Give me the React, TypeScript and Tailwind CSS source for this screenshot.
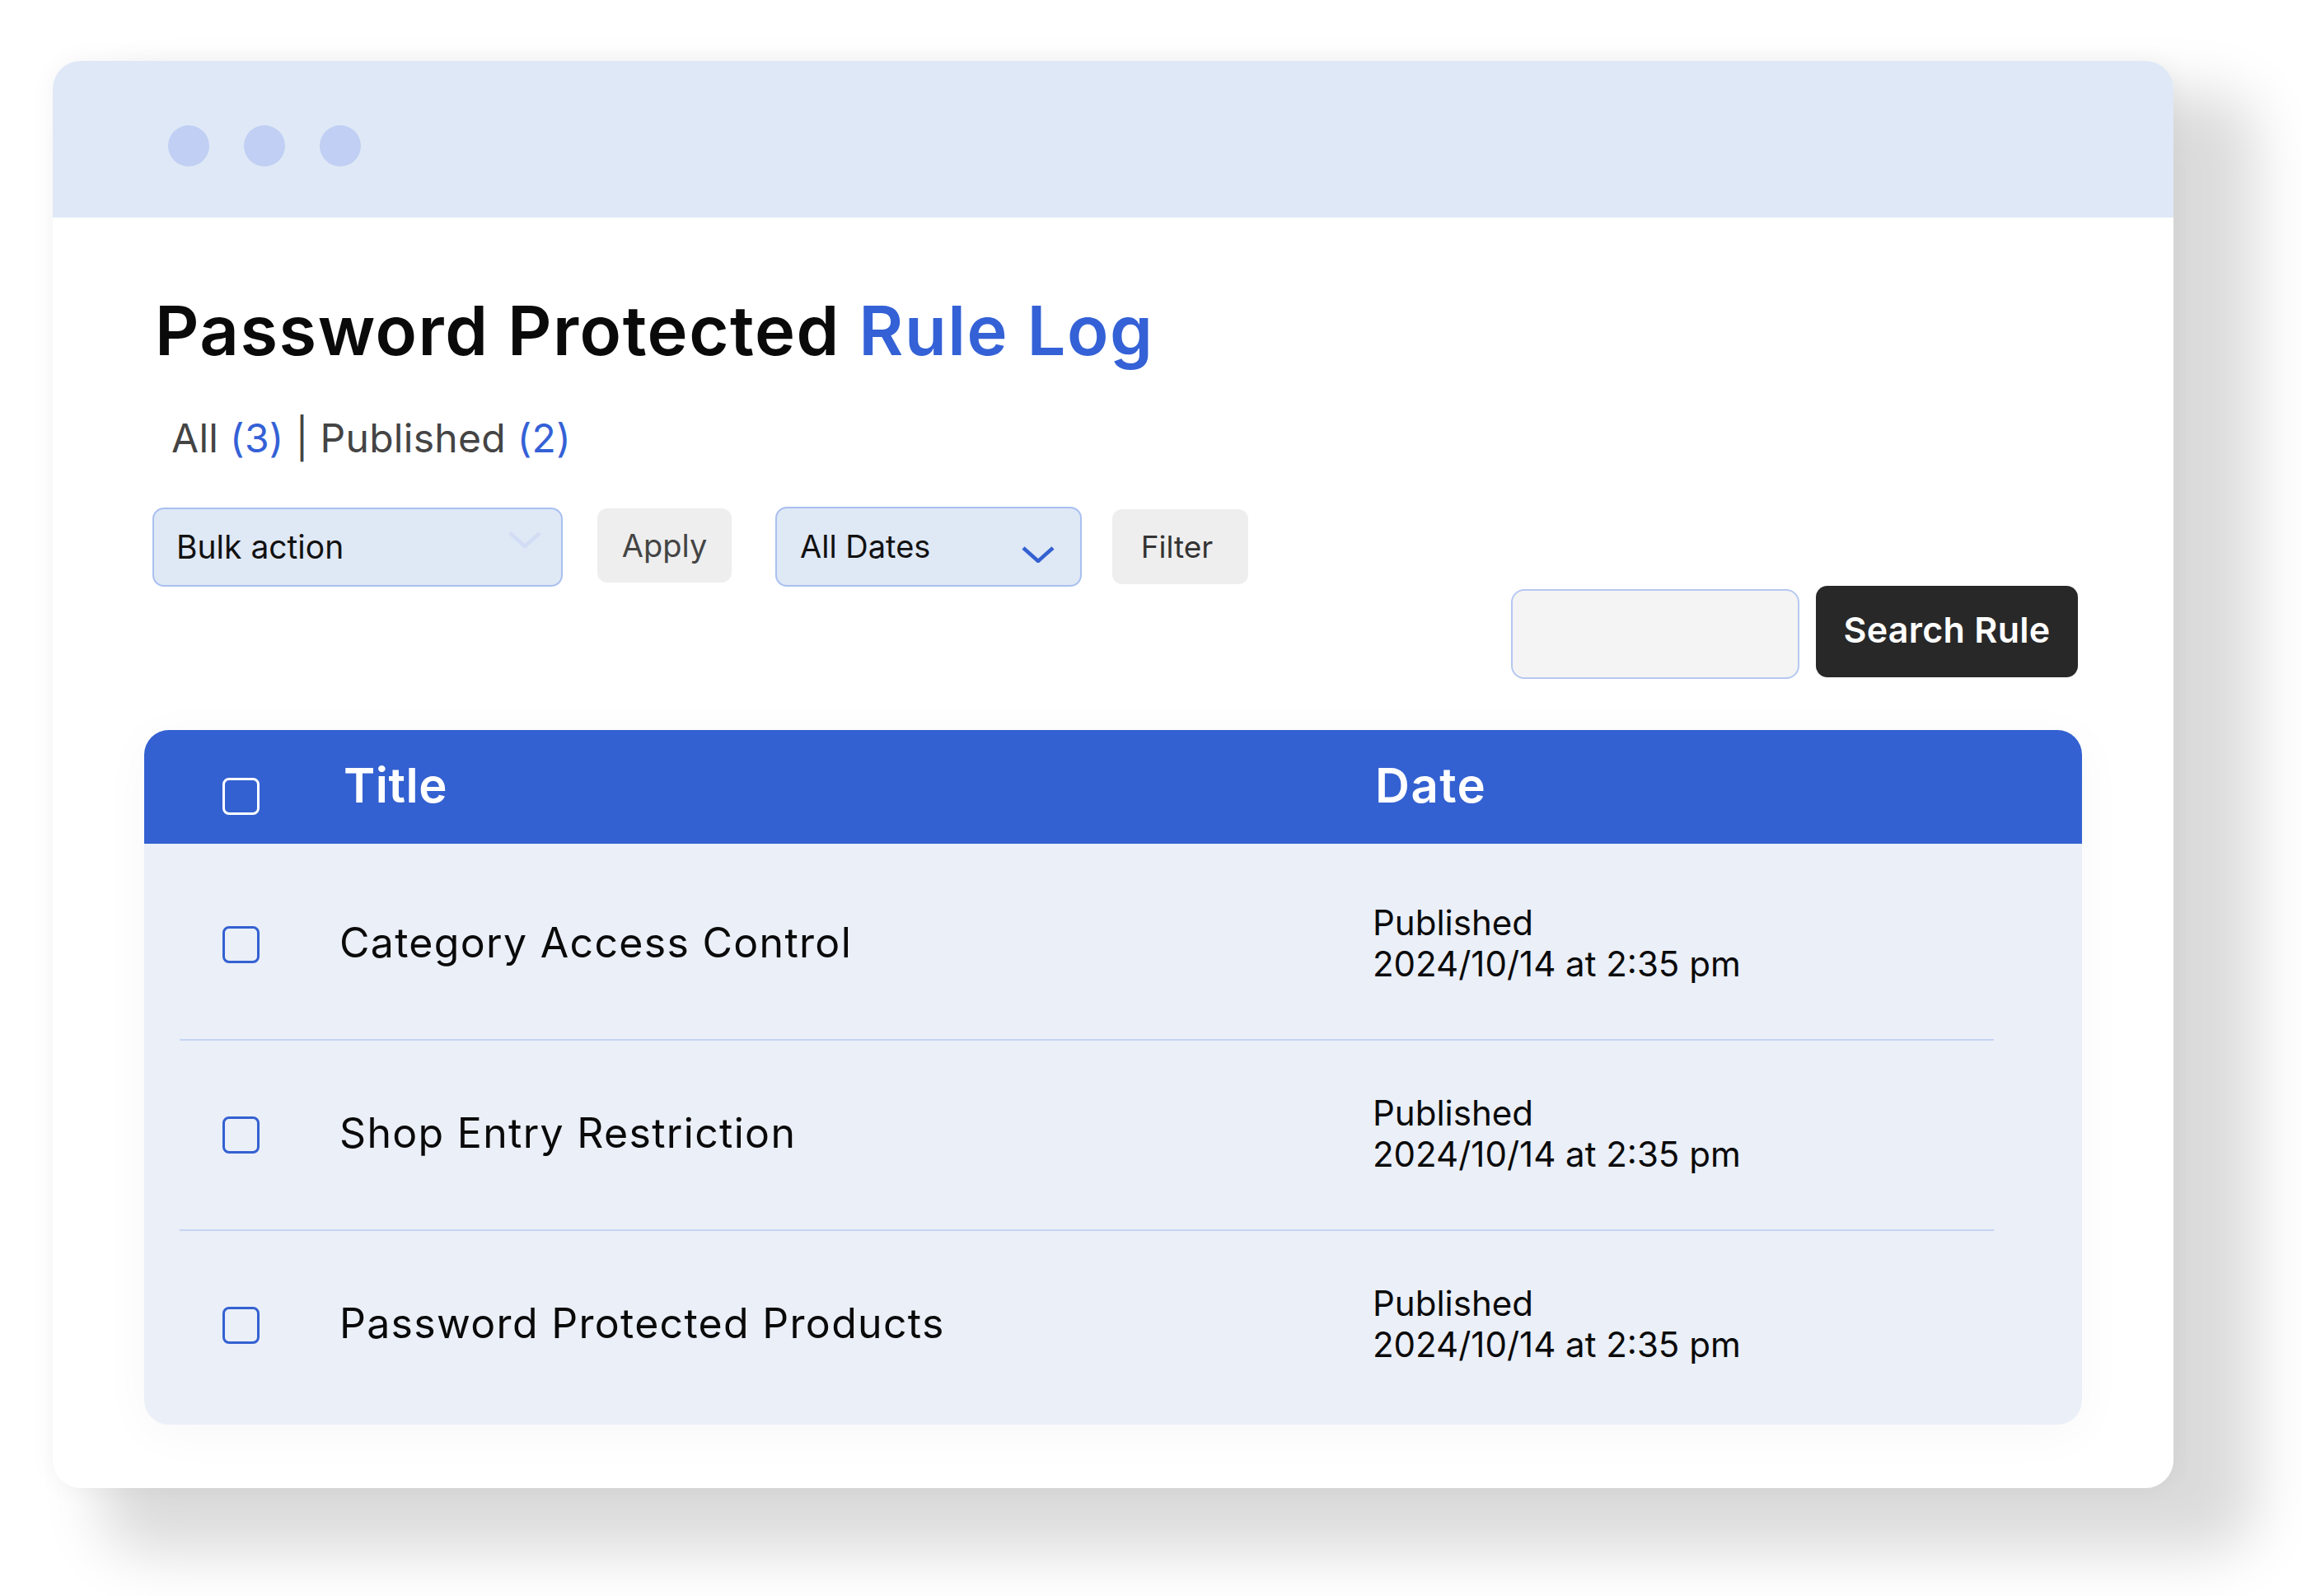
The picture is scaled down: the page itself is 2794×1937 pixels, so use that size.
import * as React from "react"

const rows = [
  { title: "Category Access Control", date: "2024/10/14 at 2:35 pm" },
  { title: "Shop Entry Restriction", date: "2024/10/14 at 2:35 pm" },
  { title: "Password Protected Products", date: "2024/10/14 at 2:35 pm" },
]

function Chevron({ className }: { className?: string }) {
  return (
    <svg viewBox="0 0 40 20" className={className} fill="none">
      <path d="M2 2 L20 18 L38 2" stroke="currentColor" strokeWidth="4.5" strokeLinecap="butt" strokeLinejoin="miter" />
    </svg>
  )
}

function Checkbox({ light }: { light?: boolean }) {
  return (
    <div
      className={
        light
          ? "w-[45px] h-[45px] shrink-0 rounded-[8px] border-[3px] border-white"
          : "w-[45px] h-[45px] shrink-0 rounded-[8px] border-[3px] border-[#3461d1]"
      }
    />
  )
}

export default function App() {
  return (
    <div className="w-[2794px] h-[1937px] bg-white overflow-hidden font-['Inter',_'Noto_Sans',_sans-serif]">
      <div className="pl-[64px] pt-[74px]">
        <div className="w-[2574px] h-[1732px] bg-white rounded-[34px] overflow-hidden shadow-[79px_58px_70px_20px_rgba(0,0,0,0.145),0_0_30px_rgba(0,0,0,0.05)] flex flex-col">
          {/* Window bar */}
          <div className="h-[190px] bg-[#dfe8f6] flex items-start gap-[42px] pl-[140px] pt-[78px]">
            <span className="w-[50px] h-[50px] rounded-full bg-[#c0cff3]" />
            <span className="w-[50px] h-[50px] rounded-full bg-[#c0cff3]" />
            <span className="w-[50px] h-[50px] rounded-full bg-[#c0cff3]" />
          </div>

          {/* Heading */}
          <h1 className="mt-[96px] ml-[124px] text-[83px] leading-none font-semibold text-[#0a0a0a] tracking-[1.5px]">
            Password Protected <span className="text-[#3461d6]">Rule Log</span>
          </h1>
          <p className="mt-[65px] ml-[144px] text-[48px] leading-none text-[#444444] tracking-[0.3px]">
            All <span className="text-[#3461d6]">(3)</span> | Published{" "}
            <span className="text-[#3461d6]">(2)</span>
          </p>

          {/* Controls */}
          <div className="mt-[60px] ml-[121px] flex items-start">
            <div className="w-[498px] h-[96px] rounded-[14px] bg-[#dfe8f5] border-2 border-[#a9c0f0] flex items-center justify-between pl-[27px] pr-[24px]">
              <span className="text-[39px] text-[#111111]">Bulk action</span>
              <Chevron className="w-[40px] h-[20px] text-[#d2ddf5] -mt-[18px]" />
            </div>
            <button className="ml-[42px] mt-[1px] w-[163px] h-[90px] rounded-[12px] bg-[#eeeeee] text-[38px] text-[#444444]">
              Apply
            </button>
            <div className="ml-[53px] -mt-[1px] w-[372px] h-[97px] rounded-[14px] bg-[#dfe8f5] border-2 border-[#a9c0f0] flex items-center justify-between pl-[28px] pr-[31px]">
              <span className="text-[38px] text-[#111111]">All Dates</span>
              <Chevron className="w-[40px] h-[20px] text-[#3461d1] mt-[18px]" />
            </div>
            <button className="ml-[37px] mt-[2px] w-[165px] h-[91px] rounded-[12px] bg-[#eeeeee] text-[37px] text-[#333333] pr-[8px]">
              Filter
            </button>
          </div>

          {/* Search */}
          <div className="flex justify-end items-start gap-[20px] pr-[116px] -mt-[1px]">
            <div className="mt-[4px] w-[350px] h-[109px] rounded-[16px] bg-[#f4f4f4] border-2 border-[#b6c8f0]" />
            <button className="w-[318px] h-[111px] rounded-[14px] bg-[#282828] text-white text-[43px] font-semibold pb-[4px] tracking-[0.3px]">
              Search Rule
            </button>
          </div>

          {/* Table */}
          <div className="mt-[62px] mx-[111px] rounded-[30px] overflow-hidden bg-[#eaeff8] shadow-[0_10px_60px_rgba(0,0,0,0.035)]">
            <div className="h-[138px] bg-[#3461d1] flex items-center pl-[95px] text-white">
              <div className="mt-[22px]">
                <Checkbox light />
              </div>
              <div className="ml-[102px] w-[1252px] text-[58px] font-semibold leading-none tracking-[0.5px] -mt-[4px]">Title</div>
              <div className="text-[58px] font-semibold leading-none tracking-[1.5px] -mt-[4px]">Date</div>
            </div>
            <div className="pt-[8px] pb-[6px]">
              {rows.map((r, i) => (
                <React.Fragment key={r.title}>
                  {i > 0 && <div className="ml-[43px] mr-[107px] h-[2px] bg-[#c6d4f4]" />}
                  <div className="h-[229px] flex items-center pl-[95px]">
                    <Checkbox />
                    <div className="ml-[97px] w-[1254px] text-[50px] leading-none text-[#0a0a0a] tracking-[1.3px] -mt-[6px]">{r.title}</div>
                    <div className="text-[42px] leading-[50px] text-[#0a0a0a] -mt-[4px]">
                      <div>Published</div>
                      <div>{r.date}</div>
                    </div>
                  </div>
                </React.Fragment>
              ))}
            </div>
          </div>
        </div>
      </div>
    </div>
  )
}
